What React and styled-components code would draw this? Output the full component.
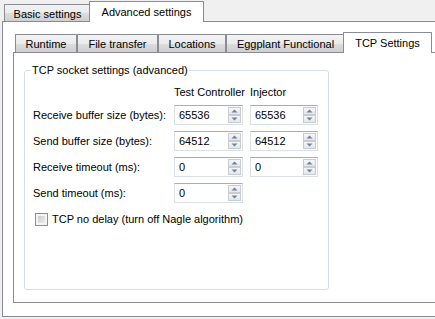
import React from 'react'
import styled, { createGlobalStyle } from 'styled-components'

const GlobalStyle = createGlobalStyle`
  body {
    margin: 0;
    background: #f0f0f0;
    font-family: "Liberation Sans", Arial, sans-serif;
    font-size: 11px;
    color: #000;
  }
`

const Window = styled.div`
  width: 435px;
  height: 319px;
  overflow: hidden;
  padding-left: 2px;
  box-sizing: border-box;
`

const TabBar = styled.div`
  display: flex;
  align-items: flex-end;
  height: ${p => p.$height}px;
  padding-left: 2px;
  position: relative;
  z-index: 1;
`

const Tab = styled.div`
  box-sizing: border-box;
  flex: none;
  width: ${p => p.$width}px;
  height: ${p => (p.$active ? p.$height + 3 : p.$height)}px;
  margin-left: ${p => (p.$active ? -2 : 0)}px;
  margin-right: ${p => (p.$active ? -2 : 0)}px;
  margin-bottom: ${p => (p.$active ? -1 : 0)}px;
  border: 1px solid #898c95;
  border-bottom: none;
  border-radius: 1px 1px 0 0;
  background: ${p => (p.$active ? '#fff' : 'linear-gradient(#f3f3f3, #ebebeb 50%, #dddddd 51%, #cfcfcf)')};
  position: relative;
  z-index: ${p => (p.$active ? 2 : 1)};
  display: flex;
  align-items: center;
  justify-content: center;
  padding-top: ${p => (p.$active ? 0 : 1)}px;
  white-space: nowrap;
`

const Pane = styled.div`
  box-sizing: border-box;
  flex: none;
  width: ${p => p.$width}px;
  height: ${p => p.$height}px;
  border: 1px solid #898c95;
  background: #fff;
  padding: ${p => p.$pad};
`

const GroupBox = styled.div`
  position: relative;
  box-sizing: border-box;
  width: 305px;
  height: 220px;
  border: 1px solid #d5dfe5;
  border-radius: 3px;
  padding: 15px 0 0 8px;
`

const GroupTitle = styled.span`
  position: absolute;
  left: 6px;
  top: -8px;
  padding: 0 1px;
  background: #fff;
  line-height: 14px;
`

const Grid = styled.div`
  display: grid;
  grid-template-columns: 134px 69px 68px;
  grid-template-rows: 13px repeat(4, 20px);
  column-gap: 7px;
  row-gap: 6px;
  align-items: center;
`

const Label = styled.span`
  line-height: 13px;
  white-space: nowrap;
`

const SpinBox = styled.div`
  box-sizing: border-box;
  height: 20px;
  border: 1px solid #dbdfe6;
  border-top-color: #abadb3;
  background: #fff;
  display: flex;
  align-items: center;
  padding: 1px 1px 1px 4px;
`

const SpinValue = styled.span`
  flex: 1;
`

const SpinButtons = styled.div`
  display: flex;
  flex-direction: column;
  width: 13px;
  height: 16px;
`

const SpinButton = styled.div`
  box-sizing: border-box;
  flex: 1;
  border: 1px solid #c9cdd3;
  background: linear-gradient(#f6f6f6, #e4e6ea);
  display: flex;
  align-items: center;
  justify-content: center;
`

const CheckRow = styled.div`
  display: flex;
  align-items: center;
  gap: 4px;
  margin: 10px 0 0 2px;
`

const CheckBox = styled.div`
  box-sizing: border-box;
  width: 13px;
  height: 13px;
  border: 1px solid #8e8f8f;
  padding: 2px;
  background: #f4f4f4;
  &::after {
    content: '';
    display: block;
    width: 100%;
    height: 100%;
    background: linear-gradient(135deg, #c9cbcf, #eceded);
  }
`

const Arrow = ({ up }) => (
  <svg width="7" height="4" viewBox="0 0 7 4">
    <path d={up ? 'M0.5 3.5 L3.5 0.5 L6.5 3.5 Z' : 'M0.5 0.5 L3.5 3.5 L6.5 0.5 Z'} fill="#6e81a0" />
  </svg>
)

const Spin = ({ value }) => (
  <SpinBox>
    <SpinValue>{value}</SpinValue>
    <SpinButtons>
      <SpinButton><Arrow up /></SpinButton>
      <SpinButton><Arrow /></SpinButton>
    </SpinButtons>
  </SpinBox>
)

const rows = [
  ['Receive buffer size (bytes):', '65536', '65536'],
  ['Send buffer size (bytes):', '64512', '64512'],
  ['Receive timeout (ms):', '0', '0'],
  ['Send timeout (ms):', '0', null],
]

const innerTabs = [
  ['Runtime', 62],
  ['File transfer', 81],
  ['Locations', 68],
  ['Eggplant Functional', 119],
]

export default function App() {
  return (
    <Window>
      <GlobalStyle />
      <TabBar $height={21}>
        <Tab $width={87} $height={17}>Basic settings</Tab>
        <Tab $width={115} $height={18} $active>Advanced settings</Tab>
      </TabBar>
      <Pane $width={480} $height={296} $pad="10px 0 0 10px">
        <TabBar $height={20}>
          {innerTabs.map(([name, w]) => (
            <Tab key={name} $width={w} $height={18}>{name}</Tab>
          ))}
          <Tab $width={89} $height={18} $active>TCP Settings</Tab>
        </TabBar>
        <Pane $width={460} $height={251} $pad="17px 0 0 10px">
          <GroupBox>
            <GroupTitle>TCP socket settings (advanced)</GroupTitle>
            <Grid>
              <span />
              <Label>Test Controller</Label>
              <Label>Injector</Label>
              {rows.map(([label, a, b]) => (
                <React.Fragment key={label}>
                  <Label>{label}</Label>
                  <Spin value={a} />
                  {b !== null ? <Spin value={b} /> : <span />}
                </React.Fragment>
              ))}
            </Grid>
            <CheckRow>
              <CheckBox />
              <Label>TCP no delay (turn off Nagle algorithm)</Label>
            </CheckRow>
          </GroupBox>
        </Pane>
      </Pane>
    </Window>
  )
}
